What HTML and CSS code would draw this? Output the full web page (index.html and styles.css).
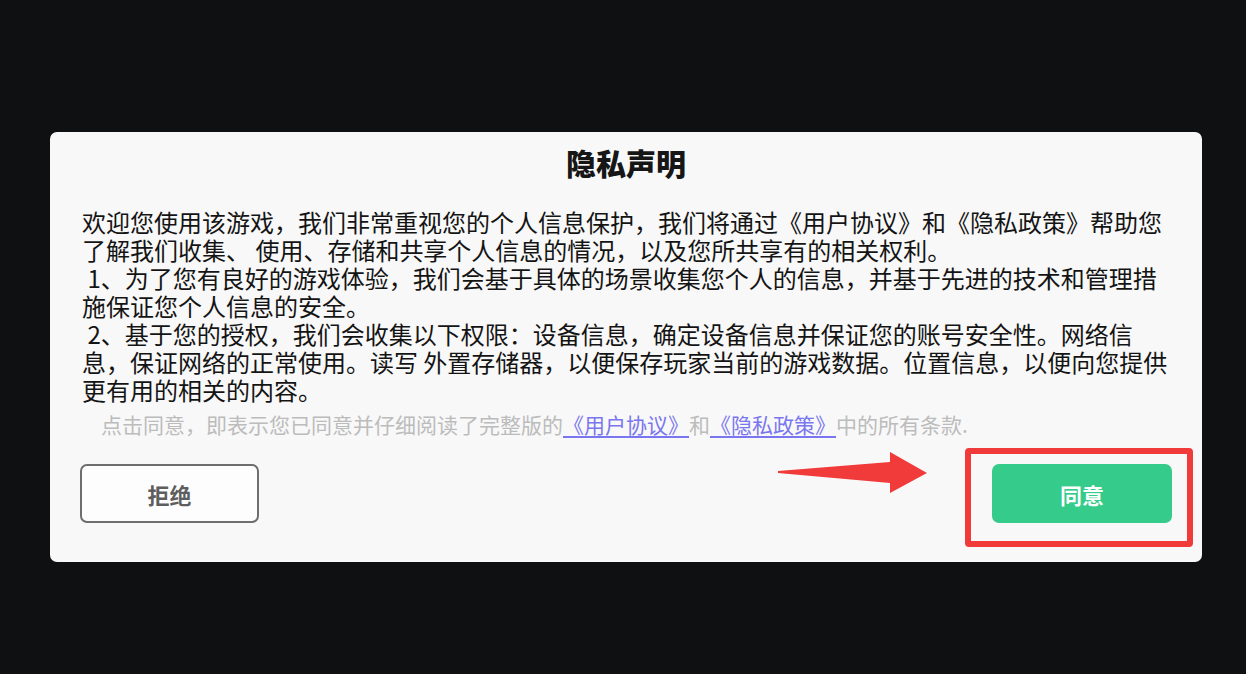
FILE: index.html
```html
<!DOCTYPE html>
<html lang="zh-CN">
<head>
<meta charset="utf-8">
<title>隐私声明</title>
<link rel="stylesheet" href="styles.css">
</head>
<body>
<div class="page">
  <div class="card">
    <h1 class="title">隐私声明</h1>
    <div class="body">
      欢迎您使用该游戏，我们非常重视您的个人信息保护，我们将通过《用户协议》和《隐私政策》帮助您<br>了解我们收集、 使用、存储和共享个人信息的情况，以及您所共享有的相关权利。<br>&nbsp;1、为了您有良好的游戏体验，我们会基于具体的场景收集您个人的信息，并基于先进的技术和管理措<br>施保证您个人信息的安全。<br>&nbsp;2、基于您的授权，我们会收集以下权限：设备信息，确定设备信息并保证您的账号安全性。网络信<br>息，保证网络的正常使用。读写 外置存储器，以便保存玩家当前的游戏数据。位置信息，以便向您提供<br>更有用的相关的内容。
    </div>
    <p class="note">点击同意，即表示您已同意并仔细阅读了完整版的<a class="link" href="#">《用户协议》</a>和<a class="link" href="#">《隐私政策》</a>中的所有条款.</p>
    <div class="actions">
      <button class="btn btn-reject">拒绝</button>
      <div class="agree-wrap">
        <svg class="arrow" width="152" height="44" viewBox="0 0 152 44">
          <polygon points="0,19 112,10 112,0 149,21 112,41 112,31 0,21" fill="#f13a3a"/>
        </svg>
        <button class="btn btn-agree">同意</button>
        <span class="highlight"></span>
      </div>
    </div>
  </div>
</div>
</body>
</html>
```
FILE: styles.css
```css
html, body {
  margin: 0;
  padding: 0;
  background: #0f1012;
}
body {
  width: 1246px;
  height: 674px;
  overflow: hidden;
  font-family: "Noto Sans CJK SC", "Noto Sans", sans-serif;
}
.page {
  padding: 132px 0 0 50px;
}
.card {
  width: 1152px;
  box-sizing: border-box;
  background: #f8f8f8;
  border-radius: 7px;
  padding: 10px 30px 39px;
}
.title {
  margin: 0;
  text-align: center;
  font-size: 30px;
  line-height: 40px;
  font-weight: 900;
  color: #161616;
}
.body {
  margin-top: 26px;
  padding-left: 2px;
  font-size: 24px;
  line-height: 28px;
  color: #141414;
  white-space: nowrap;
}
.note {
  margin: 6px 0 0;
  padding-left: 21px;
  font-size: 21px;
  line-height: 28px;
  color: #bcbcbc;
  white-space: nowrap;
}
.link {
  color: #7a76ef;
  text-decoration: underline;
  text-decoration-thickness: 2px;
  text-underline-offset: 3px;
}
.actions {
  margin-top: 26px;
  display: flex;
  justify-content: space-between;
  align-items: center;
}
.btn {
  box-sizing: border-box;
  height: 59px;
  border-radius: 7px;
  font-family: "Noto Sans CJK SC", "Noto Sans", sans-serif;
  font-size: 22px;
  font-weight: 700;
  padding: 0;
  cursor: pointer;
}
.btn-reject {
  width: 179px;
  background: #fdfdfd;
  border: 2px solid #6e6e6e;
  color: #5e5e5e;
}
.agree-wrap {
  position: relative;
  display: flex;
}
.btn-agree {
  width: 180px;
  background: #35cb8b;
  border: none;
  color: #ffffff;
}
.highlight {
  position: absolute;
  top: -16px;
  left: -27px;
  right: -21px;
  bottom: -24px;
  border: 6px solid #f13b3b;
  border-radius: 4px;
  pointer-events: none;
}
.arrow {
  position: absolute;
  left: -214px;
  top: -12px;
}
```
